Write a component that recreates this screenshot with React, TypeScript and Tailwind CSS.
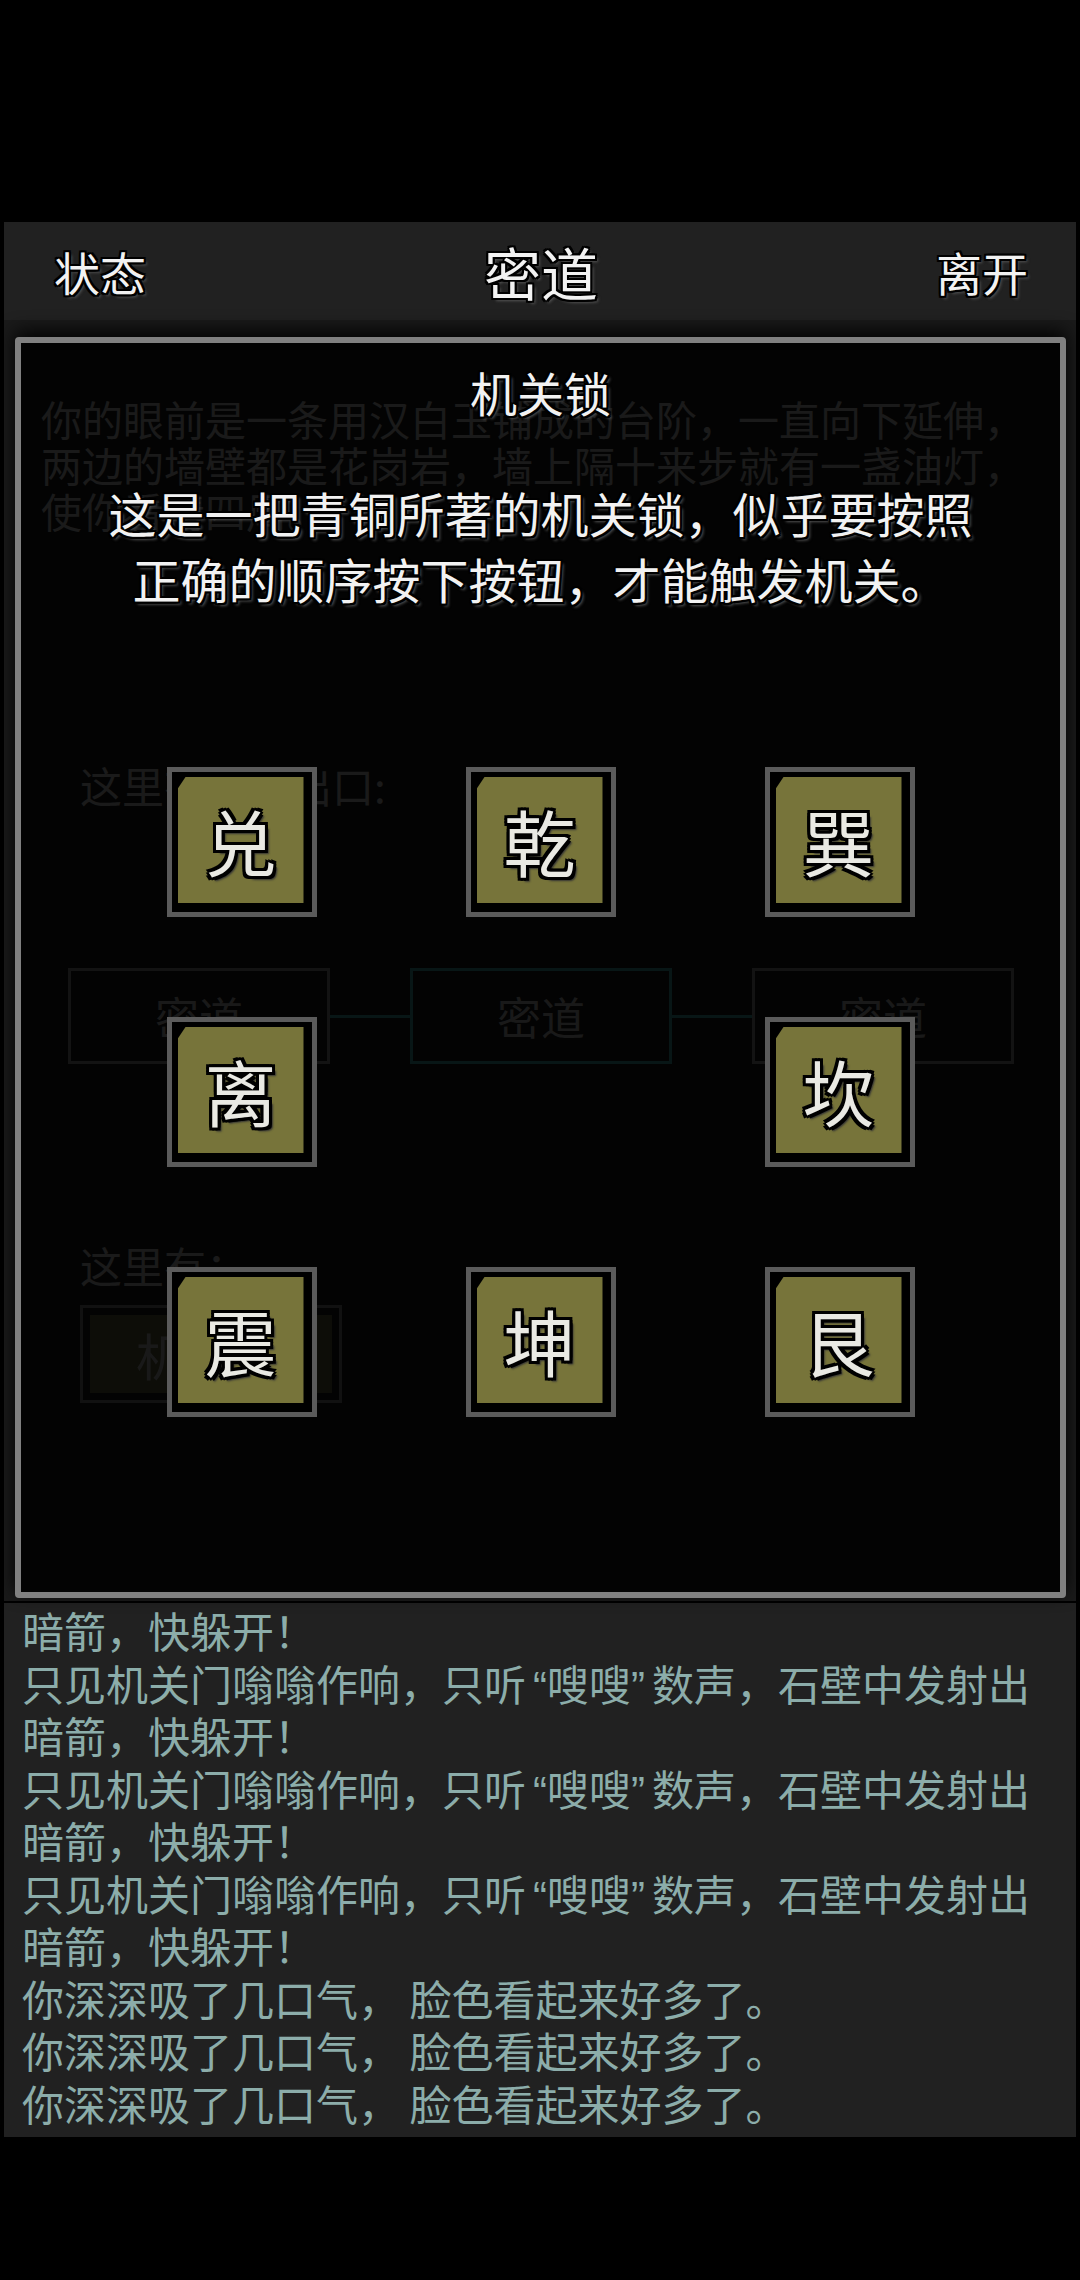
import React from "react";

const OUTLINE =
  "[text-shadow:-2px_-2px_0_#000,2px_-2px_0_#000,-2px_2px_0_#000,2px_2px_0_#000,0_-2px_0_#000,0_2px_0_#000,-2px_0_0_#000,2px_0_0_#000,3px_3px_3px_#555]";

const KEY_OUTLINE =
  "[text-shadow:-3px_-3px_0_#000,3px_-3px_0_#000,-3px_3px_0_#000,3px_3px_0_#000,0_-3px_0_#000,0_3px_0_#000,-3px_0_0_#000,3px_0_0_#000,4px_4px_2px_#333]";

const keys = ["兑", "乾", "巽", "离", "", "坎", "震", "坤", "艮"];

const logLines = [
  "暗箭，快躲开！",
  "只见机关门嗡嗡作响，只听“嗖嗖”数声，石壁中发射出",
  "暗箭，快躲开！",
  "只见机关门嗡嗡作响，只听“嗖嗖”数声，石壁中发射出",
  "暗箭，快躲开！",
  "只见机关门嗡嗡作响，只听“嗖嗖”数声，石壁中发射出",
  "暗箭，快躲开！",
  "你深深吸了几口气， 脸色看起来好多了。",
  "你深深吸了几口气， 脸色看起来好多了。",
  "你深深吸了几口气， 脸色看起来好多了。",
];

// the game draws the curly quotes half width
const renderLine = (line: string) =>
  line.split(/([“”])/).map((part, i) => {
    if (part === "“")
      return (
        <span key={i} className="inline-block w-[21px] leading-none text-right font-['Liberation_Sans',sans-serif]">
          {part}
        </span>
      );
    if (part === "”")
      return (
        <span key={i} className="inline-block w-[21px] leading-none text-left font-['Liberation_Sans',sans-serif]">
          {part}
        </span>
      );
    return <React.Fragment key={i}>{part}</React.Fragment>;
  });

const Key = ({ ch }: { ch: string }) => {
  if (!ch) return <div className="w-[150px] h-[150px]" />;
  return (
    <button className="w-[150px] h-[150px] border-[5px] border-[#5b5b5b] bg-black pt-[5px] pl-[6px] pr-[8px] pb-[9px]">
      <div className="w-full h-full bg-[#77743a] [clip-path:polygon(8px_0,100%_0,100%_100%,0_100%,0_12px)] flex items-center justify-center">
        <span className={`text-[72px] leading-none text-[#e9e9e3] ${KEY_OUTLINE}`}>{ch}</span>
      </div>
    </button>
  );
};

const ExitBox = ({ current }: { current?: boolean }) => (
  <div
    className={`w-[262px] h-[96px] flex items-center justify-center text-[44px] leading-none text-[#cfcfcf] border-[3px] ${
      current ? "border-[#44b5b0]" : "border-[#9a9a9a]"
    }`}
  >
    密道
  </div>
);

export default function App() {
  return (
    <div className="w-[1080px] h-[2280px] bg-black flex flex-col font-['Noto_Sans_CJK_SC','Noto_Sans',sans-serif] overflow-hidden">
      <div className="h-[222px] shrink-0" />

      <div className="mx-[4px] flex flex-col">
        {/* header */}
        <div className="h-[98px] bg-[#212121] flex items-center justify-between pl-[50px] pr-[48px]">
          <span className={`text-[46px] leading-none text-[#f2f2f2] ${OUTLINE}`}>状态</span>
          <span className={`text-[57px] leading-none text-[#f2f2f2] ${OUTLINE}`}>密道</span>
          <span className={`text-[46px] leading-none text-[#f2f2f2] ${OUTLINE}`}>离开</span>
        </div>

        {/* room page, under the dialog */}
        <div className="relative h-[1281px] bg-[#1a1a1a]">
          <div className="flex flex-col text-[#d0d0d0]">
            <p className="pt-[75px] px-[37px] text-[41px] leading-[46px]">
              你的眼前是一条用汉白玉铺成的台阶，一直向下延伸，两边的墙壁都是花岗岩，墙上隔十来步就有一盏油灯，使你看清四周。
            </p>
            <div className="mt-[229px] pl-[76px] text-[42px] leading-[46px]">这里有以下出口:</div>
            <div className="mt-[160px] pl-[64px] flex items-center">
              <ExitBox />
              <div className="w-[80px] h-[3px] bg-[#44b5b0]" />
              <ExitBox current />
              <div className="w-[80px] h-[3px] bg-[#44b5b0]" />
              <ExitBox />
            </div>
            <div className="mt-[178px] pl-[76px] text-[42px] leading-[46px]">这里有：</div>
            <div className="mt-[17px] ml-[76px] w-[262px] h-[98px] border-[3px] border-[#888] p-[7px]">
              <div className="w-full h-full bg-[#6a6a40] flex items-center justify-center text-[50px] leading-none text-[#cfcfcf]">
                机关锁
              </div>
            </div>
          </div>

          {/* dialog */}
          <div className="absolute left-[11px] right-[10px] top-[17px] bottom-[3px] border-[6px] border-[#808080] rounded-[4px] bg-black/[0.88] shadow-[0_-6px_18px_rgba(0,0,0,0.9)] flex flex-col items-center">
            <h2 className={`mt-[19px] text-[47px] leading-[60px] text-[#f2f2f2] ${OUTLINE}`}>机关锁</h2>
            <div className={`mt-[57px] text-[48px] leading-[66px] text-[#f2f2f2] text-center ${OUTLINE}`}>
              <div>这是一把青铜所著的机关锁，似乎要按照</div>
              <div>正确的顺序按下按钮，才能触发机关。</div>
            </div>
            <div className="mt-[156px] grid grid-cols-[150px_150px_150px] gap-x-[149px] gap-y-[100px]">
              {keys.map((k, i) => (
                <Key key={i} ch={k} />
              ))}
            </div>
          </div>
        </div>

        {/* message log */}
        <div className="mt-[2px] h-[534px] bg-[#212121] pl-[18px] pt-[1px] overflow-hidden">
          {logLines.map((line, i) => (
            <div key={i} className="h-[52.5px] text-[42px] leading-[52.5px] text-[#8cadaa] whitespace-nowrap">
              {renderLine(line)}
            </div>
          ))}
        </div>
      </div>
    </div>
  );
}
